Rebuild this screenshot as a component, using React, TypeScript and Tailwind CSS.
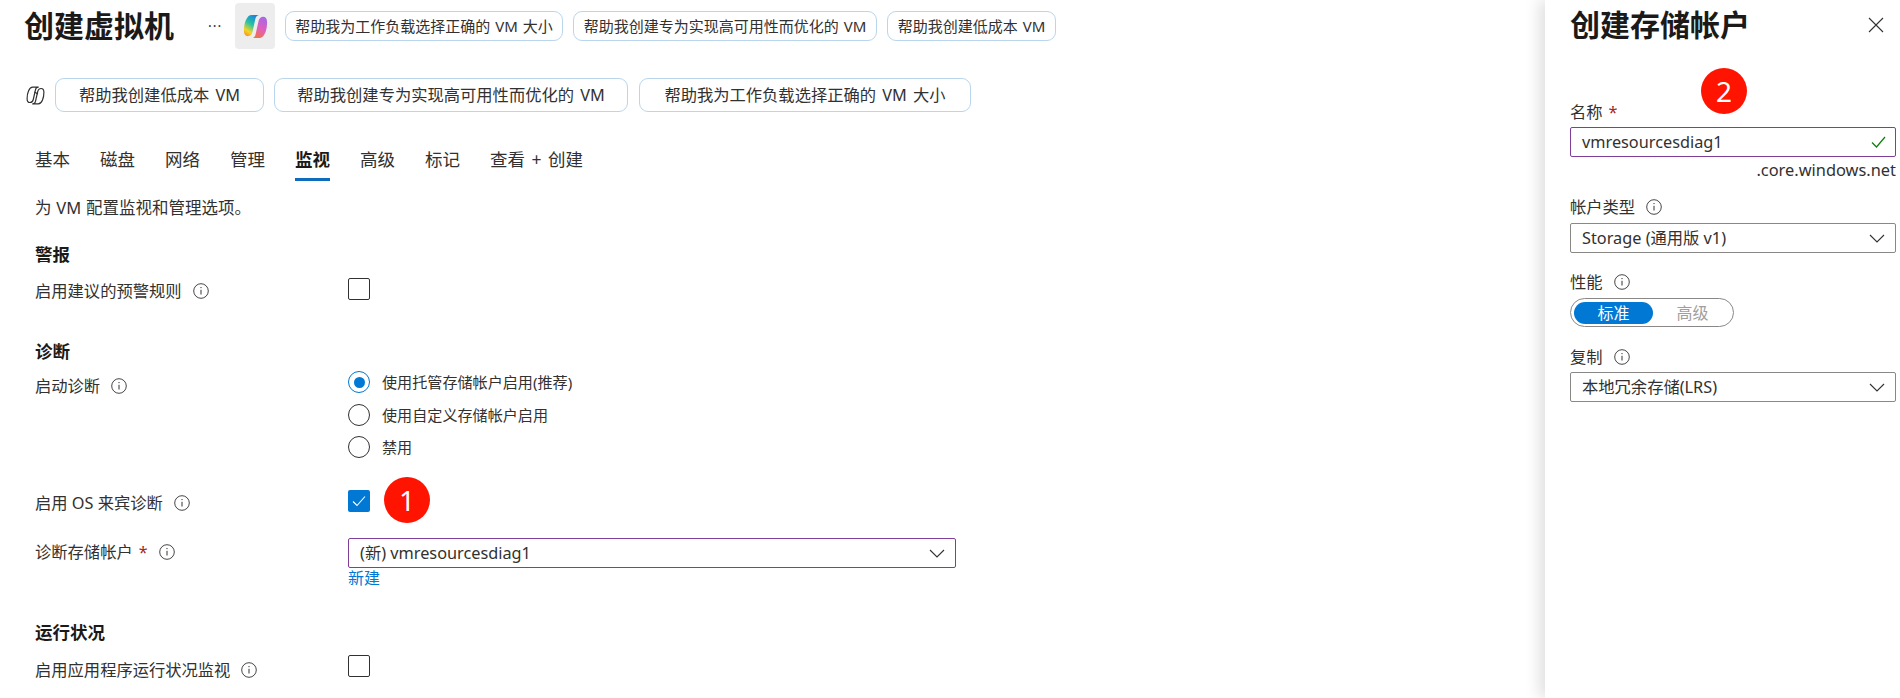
import type { ReactNode } from 'react';

const font = "font-['Noto_Sans','Noto_Sans_CJK_SC',sans-serif]";

function InfoIcon() {
  return (
    <svg className="w-[16px] h-[16px] shrink-0 text-[#323130]" viewBox="0 0 16 16" fill="none" stroke="currentColor">
      <circle cx="8" cy="8" r="7.300" strokeWidth="0.9" />
      <path d="M8 6.800v4.700" strokeWidth="1" />
      <circle cx="8" cy="4.600" r="0.7" fill="currentColor" stroke="none" />
    </svg>
  );
}

function Chevron() {
  return (
    <svg className="w-[16px] h-[9px] shrink-0" viewBox="0 0 16 9" fill="none" stroke="#323130" strokeWidth="1.1">
      <path d="M1 1l7 7 7-7" />
    </svg>
  );
}

function Checkbox({ checked }: { checked?: boolean }) {
  if (checked) {
    return (
      <div className="w-[22px] h-[22px] rounded-[2px] bg-[#0078d4] flex items-center justify-center">
        <svg className="w-[14px] h-[12px]" viewBox="0 0 14 12" fill="none" stroke="#fff" strokeWidth="1.1">
          <path d="M1 6.500l4 4 8-9" />
        </svg>
      </div>
    );
  }
  return <div className="w-[22px] h-[22px] rounded-[2px] border border-[#323130] bg-white" />;
}

function Radio({ label, checked }: { label: string; checked?: boolean }) {
  return (
    <div className="flex items-center gap-[12px] h-[22px]">
      {checked ? (
        <div className="w-[22px] h-[22px] rounded-full border border-[#0078d4] flex items-center justify-center">
          <div className="w-[11px] h-[11px] rounded-full bg-[#0078d4]" />
        </div>
      ) : (
        <div className="w-[22px] h-[22px] rounded-full border border-[#323130]" />
      )}
      <span className="text-[15.100px] leading-[22px] text-[#323130]">{label}</span>
    </div>
  );
}

function Pill({ children, className }: { children: ReactNode; className: string }) {
  return (
    <div className={`flex items-center justify-center rounded-[9px] border border-[#b9d6ec] bg-white text-[#323130] whitespace-nowrap ${className}`}>
      {children}
    </div>
  );
}

function SelectBox({ value, purple, className }: { value: string; purple?: boolean; className: string }) {
  return (
    <div className={`h-[30px] rounded-[2px] border flex items-center justify-between pl-[11px] pr-[10px] ${purple ? 'border-[#7f3f98]' : 'border-[#8a8886]'} ${className}`}>
      <span className="text-[16.300px] leading-[24px] text-[#323130]">{value}</span>
      <Chevron />
    </div>
  );
}

function Badge({ n, className }: { n: number; className: string }) {
  return (
    <div className={`absolute w-[46px] h-[46px] rounded-full bg-[#fe1400] text-white text-[28px] leading-[46px] text-center ${className}`}>
      {n}
    </div>
  );
}

const lobe = 'M11 3H19C17 3 15.500 4.500 15 6.500L12 20C11.300 23.500 9.500 25 7 25C4.500 25 3 23 3 19.500C3 11 6 3 11 3Z';

function CopilotColor() {
  return (
    <svg className="w-[29px] h-[29px]" viewBox="0 0 30 30">
      <defs>
        <linearGradient id="cpL" x1="0.7" y1="0" x2="0.25" y2="1">
          <stop offset="0" stopColor="#1d7fe0" />
          <stop offset="0.45" stopColor="#27c4a0" />
          <stop offset="0.8" stopColor="#f5d327" />
          <stop offset="1" stopColor="#f59b23" />
        </linearGradient>
        <linearGradient id="cpR" x1="0.7" y1="0" x2="0.25" y2="1">
          <stop offset="0" stopColor="#f0743c" />
          <stop offset="0.45" stopColor="#e25fb8" />
          <stop offset="1" stopColor="#a667e8" />
        </linearGradient>
      </defs>
      <path d={lobe} fill="url(#cpL)" />
      <path d={lobe} fill="url(#cpR)" transform="rotate(180 15 15)" />
    </svg>
  );
}

function CopilotOutline() {
  return (
    <svg className="w-[21px] h-[21px] shrink-0" viewBox="0 0 30 30" fill="none" stroke="#323130" strokeWidth="1.700" strokeLinejoin="round">
      <path d={lobe} />
      <path d={lobe} transform="rotate(180 15 15)" />
      <path d="M13.500 10l5 3" />
    </svg>
  );
}

function FormRow({ label, required, labelTop, mt, children }: { label: string; required?: boolean; labelTop: string; mt: string; children: ReactNode }) {
  return (
    <div className={`flex ${mt}`}>
      <div className={`w-[313px] shrink-0 flex items-center h-[24px] ${labelTop}`}>
        <span className="text-[16.300px] leading-[24px] text-[#323130]">{label}</span>
        {required && <span className="ml-[6px] text-[#a4262c] text-[16px] leading-[24px]">*</span>}
        <span className="ml-[11px]"><InfoIcon /></span>
      </div>
      <div className="flex-1">{children}</div>
    </div>
  );
}

function SectionTitle({ children, mt }: { children: ReactNode; mt: string }) {
  return <h2 className={`text-[17.500px] leading-[24px] font-semibold text-[#1b1a19] ${mt}`}>{children}</h2>;
}

const tabs = ['基本', '磁盘', '网络', '管理', '监视', '高级', '标记', '查看 + 创建'];

export default function App() {
  return (
    <div className={`flex h-[698px] overflow-hidden bg-white ${font}`}>
      {/* Main blade */}
      <main className="flex-1 min-w-0">
        <header className="flex items-center h-[52px] pl-[24px]">
          <h1 className="text-[30px] leading-[40px] font-semibold text-[#1b1a19] w-[184px]">创建虚拟机</h1>
          <span className="text-[#323130] text-[14px] leading-[14px] tracking-[1px] w-[27px]">···</span>
          <div className="w-[40px] h-[46px] rounded-[4px] bg-[#ededed] flex items-center justify-center">
            <CopilotColor />
          </div>
          <div className="flex ml-[10px] gap-[10px] text-[15px] [word-spacing:1px]">
            <Pill className="w-[278px] h-[30px]">帮助我为工作负载选择正确的 VM 大小</Pill>
            <Pill className="w-[304px] h-[30px]">帮助我创建专为实现高可用性而优化的 VM</Pill>
            <Pill className="w-[169px] h-[30px]">帮助我创建低成本 VM</Pill>
          </div>
        </header>

        <div className="flex items-center h-[34px] mt-[26px] pl-[25px] text-[16.300px] [word-spacing:2px]">
          <CopilotOutline />
          <div className="flex ml-[9px] gap-[10px]">
            <Pill className="w-[209px] h-[34px]">帮助我创建低成本 VM</Pill>
            <Pill className="w-[354px] h-[34px]">帮助我创建专为实现高可用性而优化的 VM</Pill>
            <Pill className="w-[332px] h-[34px] ml-[1px]">帮助我为工作负载选择正确的 VM 大小</Pill>
          </div>
        </div>

        <div className="pl-[35px]">
          <nav className="flex gap-[30px] mt-[32px]">
            {tabs.map((t) => (
              <div
                key={t}
                className={`h-[37px] leading-[31px] text-[17.500px] whitespace-nowrap [word-spacing:2px] ${
                  t === '监视' ? 'font-semibold text-[#1b1a19] border-b-[3px] border-[#0f6cbd]' : 'text-[#323130]'
                }`}
              >
                {t}
              </div>
            ))}
          </nav>

          <p className="mt-[15px] text-[16.500px] leading-[24px] text-[#323130] [word-spacing:0.5px]">为 VM 配置监视和管理选项。</p>

          <SectionTitle mt="mt-[22px]">警报</SectionTitle>
          <FormRow label="启用建议的预警规则" labelTop="mt-[1px]" mt="mt-[12px]">
            <Checkbox />
          </FormRow>

          <SectionTitle mt="mt-[36px]">诊断</SectionTitle>
          <FormRow label="启动诊断" labelTop="mt-[3px]" mt="mt-[8px]">
            <div className="flex flex-col gap-[10.500px]">
              <Radio label="使用托管存储帐户启用(推荐)" checked />
              <Radio label="使用自定义存储帐户启用" />
              <Radio label="禁用" />
            </div>
          </FormRow>
          <FormRow label="启用 OS 来宾诊断" labelTop="mt-[1px]" mt="mt-[32px]">
            <div className="relative">
              <Checkbox checked />
              <Badge n={1} className="left-[36px] -top-[13px]" />
            </div>
          </FormRow>
          <FormRow label="诊断存储帐户" required labelTop="mt-[2px]" mt="mt-[23px]">
            <SelectBox value="(新) vmresourcesdiag1" purple className="w-[608px]" />
            <div className="text-[16px] leading-[20px] text-[#0078d4]">新建</div>
          </FormRow>

          <SectionTitle mt="mt-[32px]">运行状况</SectionTitle>
          <FormRow label="启用应用程序运行状况监视" labelTop="mt-[3px]" mt="mt-[11px]">
            <Checkbox />
          </FormRow>
        </div>
      </main>

      {/* Create storage account panel */}
      <aside className="relative w-[355px] shrink-0 pl-[25px] pr-[4px] bg-white shadow-[-6px_0_14px_rgba(0,0,0,0.12)]">
        <div className="flex items-center justify-between h-[50px] pr-[12px]">
          <h2 className="text-[30px] leading-[40px] font-semibold text-[#1b1a19]">创建存储帐户</h2>
          <svg className="w-[16px] h-[16px]" viewBox="0 0 16 16" fill="none" stroke="#323130" strokeWidth="1.1">
            <path d="M1 1l14 14M15 1L1 15" />
          </svg>
        </div>

        <Badge n={2} className="left-[156px] top-[68px]" />

        <div className="mt-[50px] flex items-center text-[16.300px] leading-[24px] text-[#323130]">
          名称<span className="ml-[6px] text-[#a4262c]">*</span>
        </div>
        <div className="mt-[3px] h-[30px] rounded-[2px] border border-[#7f3f98] flex items-center justify-between pl-[11px] pr-[9px]">
          <span className="text-[16.300px] leading-[24px] text-[#323130]">vmresourcesdiag1</span>
          <svg className="w-[15px] h-[12px]" viewBox="0 0 15 12" fill="none" stroke="#107c10" strokeWidth="1.200">
            <path d="M1 6.500l4.500 4.500L14 1" />
          </svg>
        </div>
        <div className="mt-[1px] text-right text-[16.400px] leading-[24px] text-[#323130]">.core.windows.net</div>

        <div className="mt-[13px] flex items-center gap-[11px] text-[16.300px] leading-[24px] text-[#323130]">
          帐户类型 <InfoIcon />
        </div>
        <SelectBox value="Storage (通用版 v1)" className="mt-[4px]" />

        <div className="mt-[17px] flex items-center gap-[11px] text-[16.300px] leading-[24px] text-[#323130]">
          性能 <InfoIcon />
        </div>
        <div className="mt-[4px] w-[164px] h-[29px] rounded-full border border-[#8a8886] flex items-center pl-[3px]">
          <div className="w-[79px] h-[22px] rounded-full bg-[#0078d4] text-white text-[16px] leading-[22px] text-center">标准</div>
          <div className="w-[79px] text-[#a19f9d] text-[16px] leading-[22px] text-center">高级</div>
        </div>

        <div className="mt-[18px] flex items-center gap-[11px] text-[16.300px] leading-[24px] text-[#323130]">
          复制 <InfoIcon />
        </div>
        <SelectBox value="本地冗余存储(LRS)" className="mt-[3px]" />
      </aside>
    </div>
  );
}
